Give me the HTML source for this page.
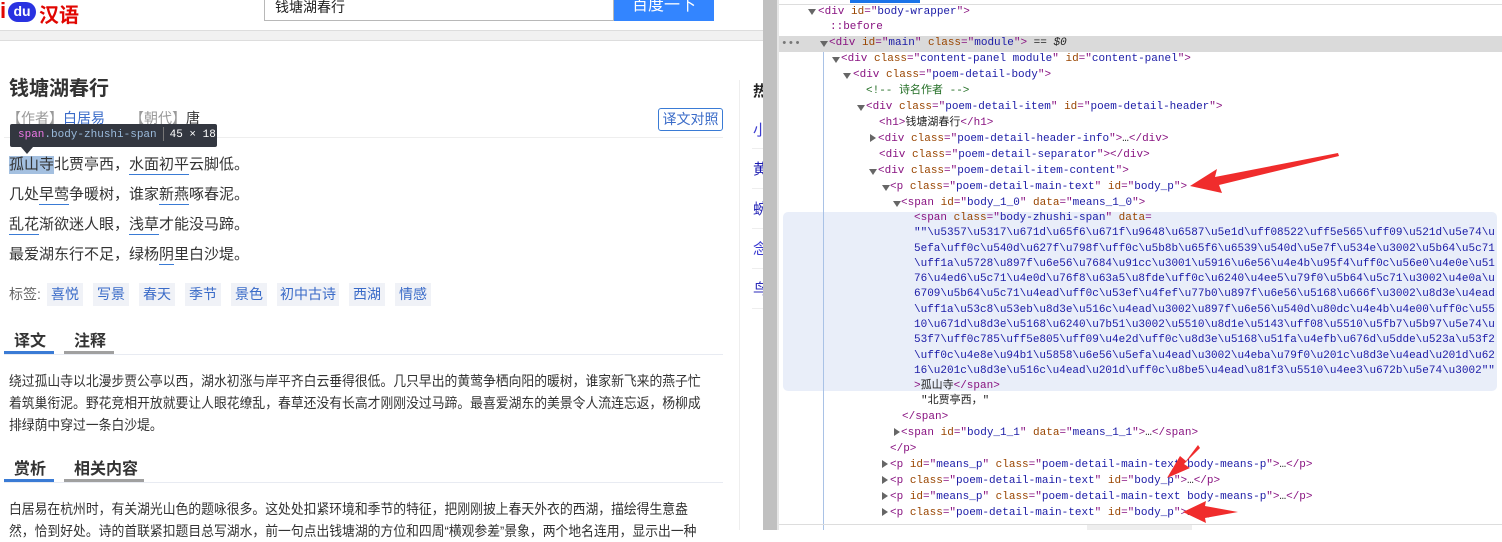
<!DOCTYPE html>
<html><head><meta charset="utf-8">
<style>
*{margin:0;padding:0;box-sizing:border-box}
body{width:1502px;height:530px;overflow:hidden;background:#fff;position:relative;font-family:"Liberation Sans","Noto Sans CJK SC",sans-serif;color:#333}
.a{position:absolute;white-space:nowrap}
.m{font-family:"Liberation Mono","Noto Sans CJK SC",monospace;font-size:11px;line-height:16px;color:#222}
.t{color:#881280}.n{color:#994500}.v{color:#1a1aa6}.c{color:#236e25}
.tri{position:absolute;width:0;height:0;border-left:4px solid transparent;border-right:4px solid transparent;border-top:6px solid #666}
.trr{position:absolute;width:0;height:0;border-top:4px solid transparent;border-bottom:4px solid transparent;border-left:6px solid #666}
.tag{position:absolute;top:283px;height:23px;background:#f0f2f7;color:#3a6bc8;font-size:14px;line-height:23px;text-align:center}
.ul{position:absolute;height:1px;background:#3a7bd5}
.para{font-size:14px;line-height:22px;color:#333;transform:scaleX(0.915);transform-origin:0 0}
</style></head><body>
<!-- header -->
<div class="a" style="left:0;top:-2px;font-size:22px;font-weight:bold;color:#e10601">i</div>
<div class="a" style="left:8px;top:2px;width:28px;height:20px;border-radius:10px;background:#2932e1;color:#fff;font-size:14px;line-height:18px;text-align:center;font-weight:bold">du</div>
<div class="a" style="left:39px;top:-1px;font-size:20px;font-weight:bold;color:#e10601">汉语</div>
<div class="a" style="left:264px;top:-1px;width:350px;height:22px;border:1px solid #b8b8b8;border-top:none;font-size:14px;line-height:16px;padding-left:10px;color:#222">钱塘湖春行</div>
<div class="a" style="left:614px;top:0;width:100px;height:21px;background:#3385ff;color:#fff;font-size:16px;line-height:12px;text-align:center">百度一下</div>
<div class="a" style="left:0;top:30px;width:763px;height:11px;background:#f1f1f1;border-top:1px solid #ddd;border-bottom:1px solid #ddd"></div>

<!-- title -->
<div class="a" style="left:9px;top:72px;font-size:20px;font-weight:bold;color:#333">钱塘湖春行</div>
<div class="a" style="left:7px;top:108px;font-size:14px;color:#999">【作者】<span style="color:#3a6bc8">白居易</span></div>
<div class="a" style="left:130px;top:108px;font-size:14px;color:#999">【朝代】<span style="color:#333">唐</span></div>
<div class="a" style="left:658px;top:108px;width:65px;height:23px;border:1px solid #3a7bd5;border-radius:3px;color:#3a6bc8;font-size:14px;line-height:21px;text-align:center">译文对照</div>
<div class="a" style="left:4px;top:137px;width:719px;height:1px;background:#eee"></div>

<!-- poem -->
<div class="a" style="left:9px;top:156px;width:45px;height:18px;background:#a4c0e0"></div>
<div class="a" style="left:9px;top:155px;font-size:15px;line-height:20px">孤山寺北贾亭西，水面初平云脚低。</div>
<div class="a" style="left:9px;top:185px;font-size:15px;line-height:20px">几处早莺争暖树，谁家新燕啄春泥。</div>
<div class="a" style="left:9px;top:215px;font-size:15px;line-height:20px">乱花渐欲迷人眼，浅草才能没马蹄。</div>
<div class="a" style="left:9px;top:245px;font-size:15px;line-height:20px">最爱湖东行不足，绿杨阴里白沙堤。</div>
<div class="ul" style="left:129px;top:174px;width:60px"></div>
<div class="ul" style="left:39px;top:204px;width:30px"></div>
<div class="ul" style="left:159px;top:204px;width:30px"></div>
<div class="ul" style="left:9px;top:234px;width:30px"></div>
<div class="ul" style="left:129px;top:234px;width:30px"></div>
<div class="ul" style="left:159px;top:264px;width:15px"></div>

<!-- tooltip -->
<div class="a" style="left:10px;top:124px;width:207px;height:23px;background:#333740;border-radius:2px;font-family:'Liberation Mono',monospace;font-size:11px;line-height:23px;padding-left:8px;color:#fff"><span style="color:#ee78e6">span</span><span style="color:#9bbbdc">.body-zhushi-span</span><span style="display:inline-block;width:1px;height:14px;background:#777;margin:0 6px;vertical-align:middle"></span>45 × 18</div>
<div class="a" style="left:21px;top:147px;width:0;height:0;border-left:6px solid transparent;border-right:6px solid transparent;border-top:7px solid #333740"></div>

<!-- tags -->
<div class="a" style="left:9px;top:284px;font-size:14px;color:#666">标签:</div>
<div class="tag" style="left:47px;width:36px">喜悦</div>
<div class="tag" style="left:93px;width:36px">写景</div>
<div class="tag" style="left:139px;width:36px">春天</div>
<div class="tag" style="left:185px;width:36px">季节</div>
<div class="tag" style="left:231px;width:36px">景色</div>
<div class="tag" style="left:277px;width:62px">初中古诗</div>
<div class="tag" style="left:349px;width:36px">西湖</div>
<div class="tag" style="left:395px;width:36px">情感</div>

<!-- tabs 1 -->
<div class="a" style="left:14px;top:327px;font-size:16px;font-weight:bold;color:#333">译文</div>
<div class="a" style="left:74px;top:327px;font-size:16px;font-weight:bold;color:#333">注释</div>
<div class="a" style="left:4px;top:354px;width:719px;height:1px;background:#e8ebf2"></div>
<div class="a" style="left:4px;top:351px;width:50px;height:3px;background:#3a7bd5"></div>
<div class="a" style="left:64px;top:351px;width:50px;height:3px;background:#a0a0a0"></div>
<div class="a para" style="left:9px;top:370px">绕过孤山寺以北漫步贾公亭以西，湖水初涨与岸平齐白云垂得很低。几只早出的黄莺争栖向阳的暖树，谁家新飞来的燕子忙<br>着筑巢衔泥。野花竞相开放就要让人眼花缭乱，春草还没有长高才刚刚没过马蹄。最喜爱湖东的美景令人流连忘返，杨柳成<br>排绿荫中穿过一条白沙堤。</div>

<!-- tabs 2 -->
<div class="a" style="left:14px;top:455px;font-size:16px;font-weight:bold;color:#333">赏析</div>
<div class="a" style="left:74px;top:455px;font-size:16px;font-weight:bold;color:#333">相关内容</div>
<div class="a" style="left:4px;top:482px;width:719px;height:1px;background:#e8ebf2"></div>
<div class="a" style="left:4px;top:479px;width:50px;height:3px;background:#3a7bd5"></div>
<div class="a" style="left:64px;top:479px;width:80px;height:3px;background:#a0a0a0"></div>
<div class="a para" style="left:9px;top:498px">白居易在杭州时，有关湖光山色的题咏很多。这处处扣紧环境和季节的特征，把刚刚披上春天外衣的西湖，描绘得生意盎<br>然，恰到好处。诗的首联紧扣题目总写湖水，前一句点出钱塘湖的方位和四周“横观参差”景象，两个地名连用，显示出一种</div>

<!-- right sidebar -->
<div class="a" style="left:739px;top:80px;width:1px;height:450px;background:#eee"></div>
<div class="a" style="left:753px;top:80px;font-size:15px;font-weight:bold;color:#222">热</div>
<div class="a" style="left:753px;top:119px;font-size:15px;color:#3a3ad0">小</div>
<div class="a" style="left:753px;top:158px;font-size:15px;color:#1a1ab0">黄</div>
<div class="a" style="left:753px;top:198px;font-size:15px;color:#2a2ab8">蜿</div>
<div class="a" style="left:753px;top:238px;font-size:15px;color:#3a3ad0">念</div>
<div class="a" style="left:753px;top:278px;font-size:15px;color:#2a2ab8">鸟</div>
<div class="a" style="left:752px;top:148px;width:11px;height:1px;background:#eee"></div>
<div class="a" style="left:752px;top:188px;width:11px;height:1px;background:#eee"></div>
<div class="a" style="left:752px;top:228px;width:11px;height:1px;background:#eee"></div>
<div class="a" style="left:752px;top:268px;width:11px;height:1px;background:#eee"></div>
<div class="a" style="left:752px;top:308px;width:11px;height:1px;background:#eee"></div>

<!-- divider -->
<div class="a" style="left:763px;top:0;width:14px;height:530px;background:#c0c0c0"></div>
<div class="a" style="left:777px;top:0;width:2px;height:530px;background:#e6e6e6"></div>

<!-- devtools -->
<div class="a" style="left:779px;top:4px;width:723px;height:1px;background:#ddd"></div>
<div class="a" style="left:850px;top:0;width:70px;height:3px;background:#1a73e8"></div>
<div class="a" style="left:779px;top:36px;width:723px;height:16px;background:#dadada"></div>
<div class="a" style="left:783px;top:212px;width:714px;height:179px;background:#e9eef9;border-radius:5px"></div>
<div class="a" style="left:823px;top:52px;width:1px;height:478px;background:#a9c2e6"></div>
<div class="a" style="left:779px;top:524px;width:723px;height:1px;background:#ddd"></div>
<div class="a" style="left:1087px;top:525px;width:105px;height:5px;background:#eee"></div>

<div class="a m" style="left:781px;top:36px;color:#777">•••</div>
<div class="tri" style="left:808px;top:9px"></div>
<div class="a m" style="left:818px;top:4px"><span class="t">&lt;div </span><span class="n">id</span><span class="t">="</span><span class="v">body-wrapper</span><span class="t">"&gt;</span></div>
<div class="a m" style="left:830px;top:19px;color:#881280">::before</div>
<div class="tri" style="left:820px;top:41px"></div>
<div class="a m" style="left:829px;top:35px"><span class="t">&lt;div </span><span class="n">id</span><span class="t">="</span><span class="v">main</span><span class="t">" </span><span class="n">class</span><span class="t">="</span><span class="v">module</span><span class="t">"&gt;</span> == <i>$0</i></div>
<div class="tri" style="left:832px;top:57px"></div>
<div class="a m" style="left:841px;top:51px"><span class="t">&lt;div </span><span class="n">class</span><span class="t">="</span><span class="v">content-panel module</span><span class="t">" </span><span class="n">id</span><span class="t">="</span><span class="v">content-panel</span><span class="t">"&gt;</span></div>
<div class="tri" style="left:843px;top:73px"></div>
<div class="a m" style="left:853px;top:67px"><span class="t">&lt;div </span><span class="n">class</span><span class="t">="</span><span class="v">poem-detail-body</span><span class="t">"&gt;</span></div>
<div class="a m c" style="left:866px;top:83px">&lt;!-- 诗名作者 --&gt;</div>
<div class="tri" style="left:857px;top:105px"></div>
<div class="a m" style="left:866px;top:99px"><span class="t">&lt;div </span><span class="n">class</span><span class="t">="</span><span class="v">poem-detail-item</span><span class="t">" </span><span class="n">id</span><span class="t">="</span><span class="v">poem-detail-header</span><span class="t">"&gt;</span></div>
<div class="a m" style="left:879px;top:115px"><span class="t">&lt;h1&gt;</span>钱塘湖春行<span class="t">&lt;/h1&gt;</span></div>
<div class="trr" style="left:870px;top:134px"></div>
<div class="a m" style="left:878px;top:131px"><span class="t">&lt;div </span><span class="n">class</span><span class="t">="</span><span class="v">poem-detail-header-info</span><span class="t">"&gt;</span>…<span class="t">&lt;/div&gt;</span></div>
<div class="a m" style="left:879px;top:147px"><span class="t">&lt;div </span><span class="n">class</span><span class="t">="</span><span class="v">poem-detail-separator</span><span class="t">"&gt;&lt;/div&gt;</span></div>
<div class="tri" style="left:869px;top:169px"></div>
<div class="a m" style="left:878px;top:163px"><span class="t">&lt;div </span><span class="n">class</span><span class="t">="</span><span class="v">poem-detail-item-content</span><span class="t">"&gt;</span></div>
<div class="tri" style="left:882px;top:185px"></div>
<div class="a m" style="left:890px;top:179px"><span class="t">&lt;p </span><span class="n">class</span><span class="t">="</span><span class="v">poem-detail-main-text</span><span class="t">" </span><span class="n">id</span><span class="t">="</span><span class="v">body_p</span><span class="t">"&gt;</span></div>
<div class="tri" style="left:893px;top:201px"></div>
<div class="a m" style="left:901px;top:195px"><span class="t">&lt;span </span><span class="n">id</span><span class="t">="</span><span class="v">body_1_0</span><span class="t">" </span><span class="n">data</span><span class="t">="</span><span class="v">means_1_0</span><span class="t">"&gt;</span></div>
<div class="a m" style="left:914px;top:211px;line-height:15.3px"><span class="t">&lt;span </span><span class="n">class</span><span class="t">="</span><span class="v">body-zhushi-span</span><span class="t">" </span><span class="n">data</span><span class="t">=</span><br><span class="v">""\u5357\u5317\u671d\u65f6\u671f\u9648\u6587\u5e1d\uff08522\uff5e565\uff09\u521d\u5e74\u<br>5efa\uff0c\u540d\u627f\u798f\uff0c\u5b8b\u65f6\u6539\u540d\u5e7f\u534e\u3002\u5b64\u5c71<br>\uff1a\u5728\u897f\u6e56\u7684\u91cc\u3001\u5916\u6e56\u4e4b\u95f4\uff0c\u56e0\u4e0e\u51<br>76\u4ed6\u5c71\u4e0d\u76f8\u63a5\u8fde\uff0c\u6240\u4ee5\u79f0\u5b64\u5c71\u3002\u4e0a\u<br>6709\u5b64\u5c71\u4ead\uff0c\u53ef\u4fef\u77b0\u897f\u6e56\u5168\u666f\u3002\u8d3e\u4ead<br>\uff1a\u53c8\u53eb\u8d3e\u516c\u4ead\u3002\u897f\u6e56\u540d\u80dc\u4e4b\u4e00\uff0c\u55<br>10\u671d\u8d3e\u5168\u6240\u7b51\u3002\u5510\u8d1e\u5143\uff08\u5510\u5fb7\u5b97\u5e74\u<br>53f7\uff0c785\uff5e805\uff09\u4e2d\uff0c\u8d3e\u5168\u51fa\u4efb\u676d\u5dde\u523a\u53f2<br>\uff0c\u4e8e\u94b1\u5858\u6e56\u5efa\u4ead\u3002\u4eba\u79f0\u201c\u8d3e\u4ead\u201d\u62<br>16\u201c\u8d3e\u516c\u4ead\u201d\uff0c\u8be5\u4ead\u81f3\u5510\u4ee3\u672b\u5e74\u3002""</span><br><span class="t">&gt;</span>孤山寺<span class="t">&lt;/span&gt;</span></div>
<div class="a m" style="left:921px;top:393px">"北贾亭西，"</div>
<div class="a m" style="left:902px;top:409px"><span class="t">&lt;/span&gt;</span></div>
<div class="trr" style="left:894px;top:428px"></div>
<div class="a m" style="left:901px;top:425px"><span class="t">&lt;span </span><span class="n">id</span><span class="t">="</span><span class="v">body_1_1</span><span class="t">" </span><span class="n">data</span><span class="t">="</span><span class="v">means_1_1</span><span class="t">"&gt;</span>…<span class="t">&lt;/span&gt;</span></div>
<div class="a m" style="left:890px;top:441px"><span class="t">&lt;/p&gt;</span></div>
<div class="trr" style="left:882px;top:460px"></div>
<div class="a m" style="left:890px;top:457px"><span class="t">&lt;p </span><span class="n">id</span><span class="t">="</span><span class="v">means_p</span><span class="t">" </span><span class="n">class</span><span class="t">="</span><span class="v">poem-detail-main-text body-means-p</span><span class="t">"&gt;</span>…<span class="t">&lt;/p&gt;</span></div>
<div class="trr" style="left:882px;top:476px"></div>
<div class="a m" style="left:890px;top:473px"><span class="t">&lt;p </span><span class="n">class</span><span class="t">="</span><span class="v">poem-detail-main-text</span><span class="t">" </span><span class="n">id</span><span class="t">="</span><span class="v">body_p</span><span class="t">"&gt;</span>…<span class="t">&lt;/p&gt;</span></div>
<div class="trr" style="left:882px;top:492px"></div>
<div class="a m" style="left:890px;top:489px"><span class="t">&lt;p </span><span class="n">id</span><span class="t">="</span><span class="v">means_p</span><span class="t">" </span><span class="n">class</span><span class="t">="</span><span class="v">poem-detail-main-text body-means-p</span><span class="t">"&gt;</span>…<span class="t">&lt;/p&gt;</span></div>
<div class="trr" style="left:882px;top:508px"></div>
<div class="a m" style="left:890px;top:505px"><span class="t">&lt;p </span><span class="n">class</span><span class="t">="</span><span class="v">poem-detail-main-text</span><span class="t">" </span><span class="n">id</span><span class="t">="</span><span class="v">body_p</span><span class="t">"&gt;</span>…<span class="t">&lt;/p&gt;</span></div>

<!-- red arrows -->
<svg class="a" style="left:0;top:0" width="1502" height="530">
<g fill="#f02c2c">
<polygon points="1338,153 1215,177 1217,169 1190,186 1222,193 1219,185 1339,156"/>
<polygon points="1198,445 1186,461 1180,456 1167,478 1190,468 1184,464 1200,448"/>
<polygon points="1238,512 1205,506 1206,501 1183,512 1206,523 1205,518"/>
</g>
</svg>
</body></html>
